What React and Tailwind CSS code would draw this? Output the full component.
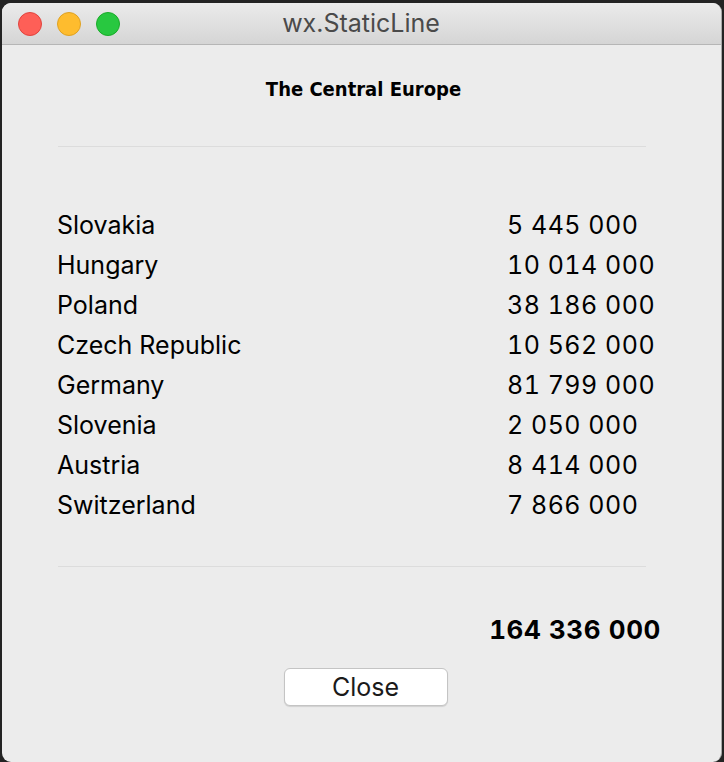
import React from "react";

const rows = [
  ["Slovakia", "5 445 000"],
  ["Hungary", "10 014 000"],
  ["Poland", "38 186 000"],
  ["Czech Republic", "10 562 000"],
  ["Germany", "81 799 000"],
  ["Slovenia", "2 050 000"],
  ["Austria", "8 414 000"],
  ["Switzerland", "7 866 000"],
];

// Botones del semáforo de macOS
function TrafficLight({ color, border }) {
  return (
    <span
      className={`block w-[24px] h-[24px] rounded-full border ${color} ${border}`}
    />
  );
}

export default function App() {
  return (
    <div className="w-[724px] h-[762px] bg-[#232323] overflow-hidden pt-[3px] pl-[2px]">
      <div className="w-[720px] h-[759px] rounded-[9px] bg-[#ececec] border-r border-[#a9a9a9] overflow-hidden flex flex-col">
        {/* Barra de título */}
        <div className="relative h-[42px] shrink-0 bg-gradient-to-b from-[#ebebeb] to-[#d5d5d5] border-b border-[#b6b6b6] flex items-center">
          <div className="flex items-center gap-[15px] pl-[16px]">
            <TrafficLight color="bg-[#fe5f57]" border="border-[#e0443e]" />
            <TrafficLight color="bg-[#febc2e]" border="border-[#dea123]" />
            <TrafficLight color="bg-[#28c840]" border="border-[#1aab29]" />
          </div>
          <div className="absolute inset-0 flex items-center justify-center pr-[1px] font-['Inter',sans-serif] text-[25px] text-[#4a4a4a]">
            wx.StaticLine
          </div>
        </div>

        {/* Contenido */}
        <div className="flex flex-col">
          <div className="pt-[33px] h-[54px] leading-[22px] text-center pl-[4px] font-['DejaVu_Sans_Condensed','DejaVu_Sans',sans-serif] [font-stretch:condensed] font-bold text-[20px] text-black">
            The Central Europe
          </div>

          <div className="ml-[56px] mt-[47px] w-[588px] h-px bg-[#dcdcdc]" />

          <div className="ml-[55px] mt-[58px] grid grid-cols-[450px_auto] font-['Inter',sans-serif] text-[25px] text-black">
            {rows.map(([country, population]) => (
              <React.Fragment key={country}>
                <div className="h-[40px] leading-[40px]">{country}</div>
                <div className="h-[40px] leading-[40px] tabular-nums tracking-[0.5px]">{population}</div>
              </React.Fragment>
            ))}
          </div>

          <div className="ml-[56px] mt-[41px] w-[588px] h-px bg-[#dcdcdc]" />

          <div className="ml-[55px] mt-[48px] w-[604px] flex justify-end h-[30px] leading-[30px] font-['Inter',sans-serif] font-bold text-[26px] tabular-nums tracking-[0.6px] text-black">
            164 336 000
          </div>

          <div className="mt-[23px] flex justify-center pl-[8px]">
            <button className="w-[164px] h-[38px] bg-white rounded-[6px] border border-[#c4c4c4] shadow-[0_1px_1px_rgba(0,0,0,0.12)] font-['Inter',sans-serif] text-[25px] text-[#1a1a1a] leading-none">
              Close
            </button>
          </div>
        </div>
      </div>
    </div>
  );
}
